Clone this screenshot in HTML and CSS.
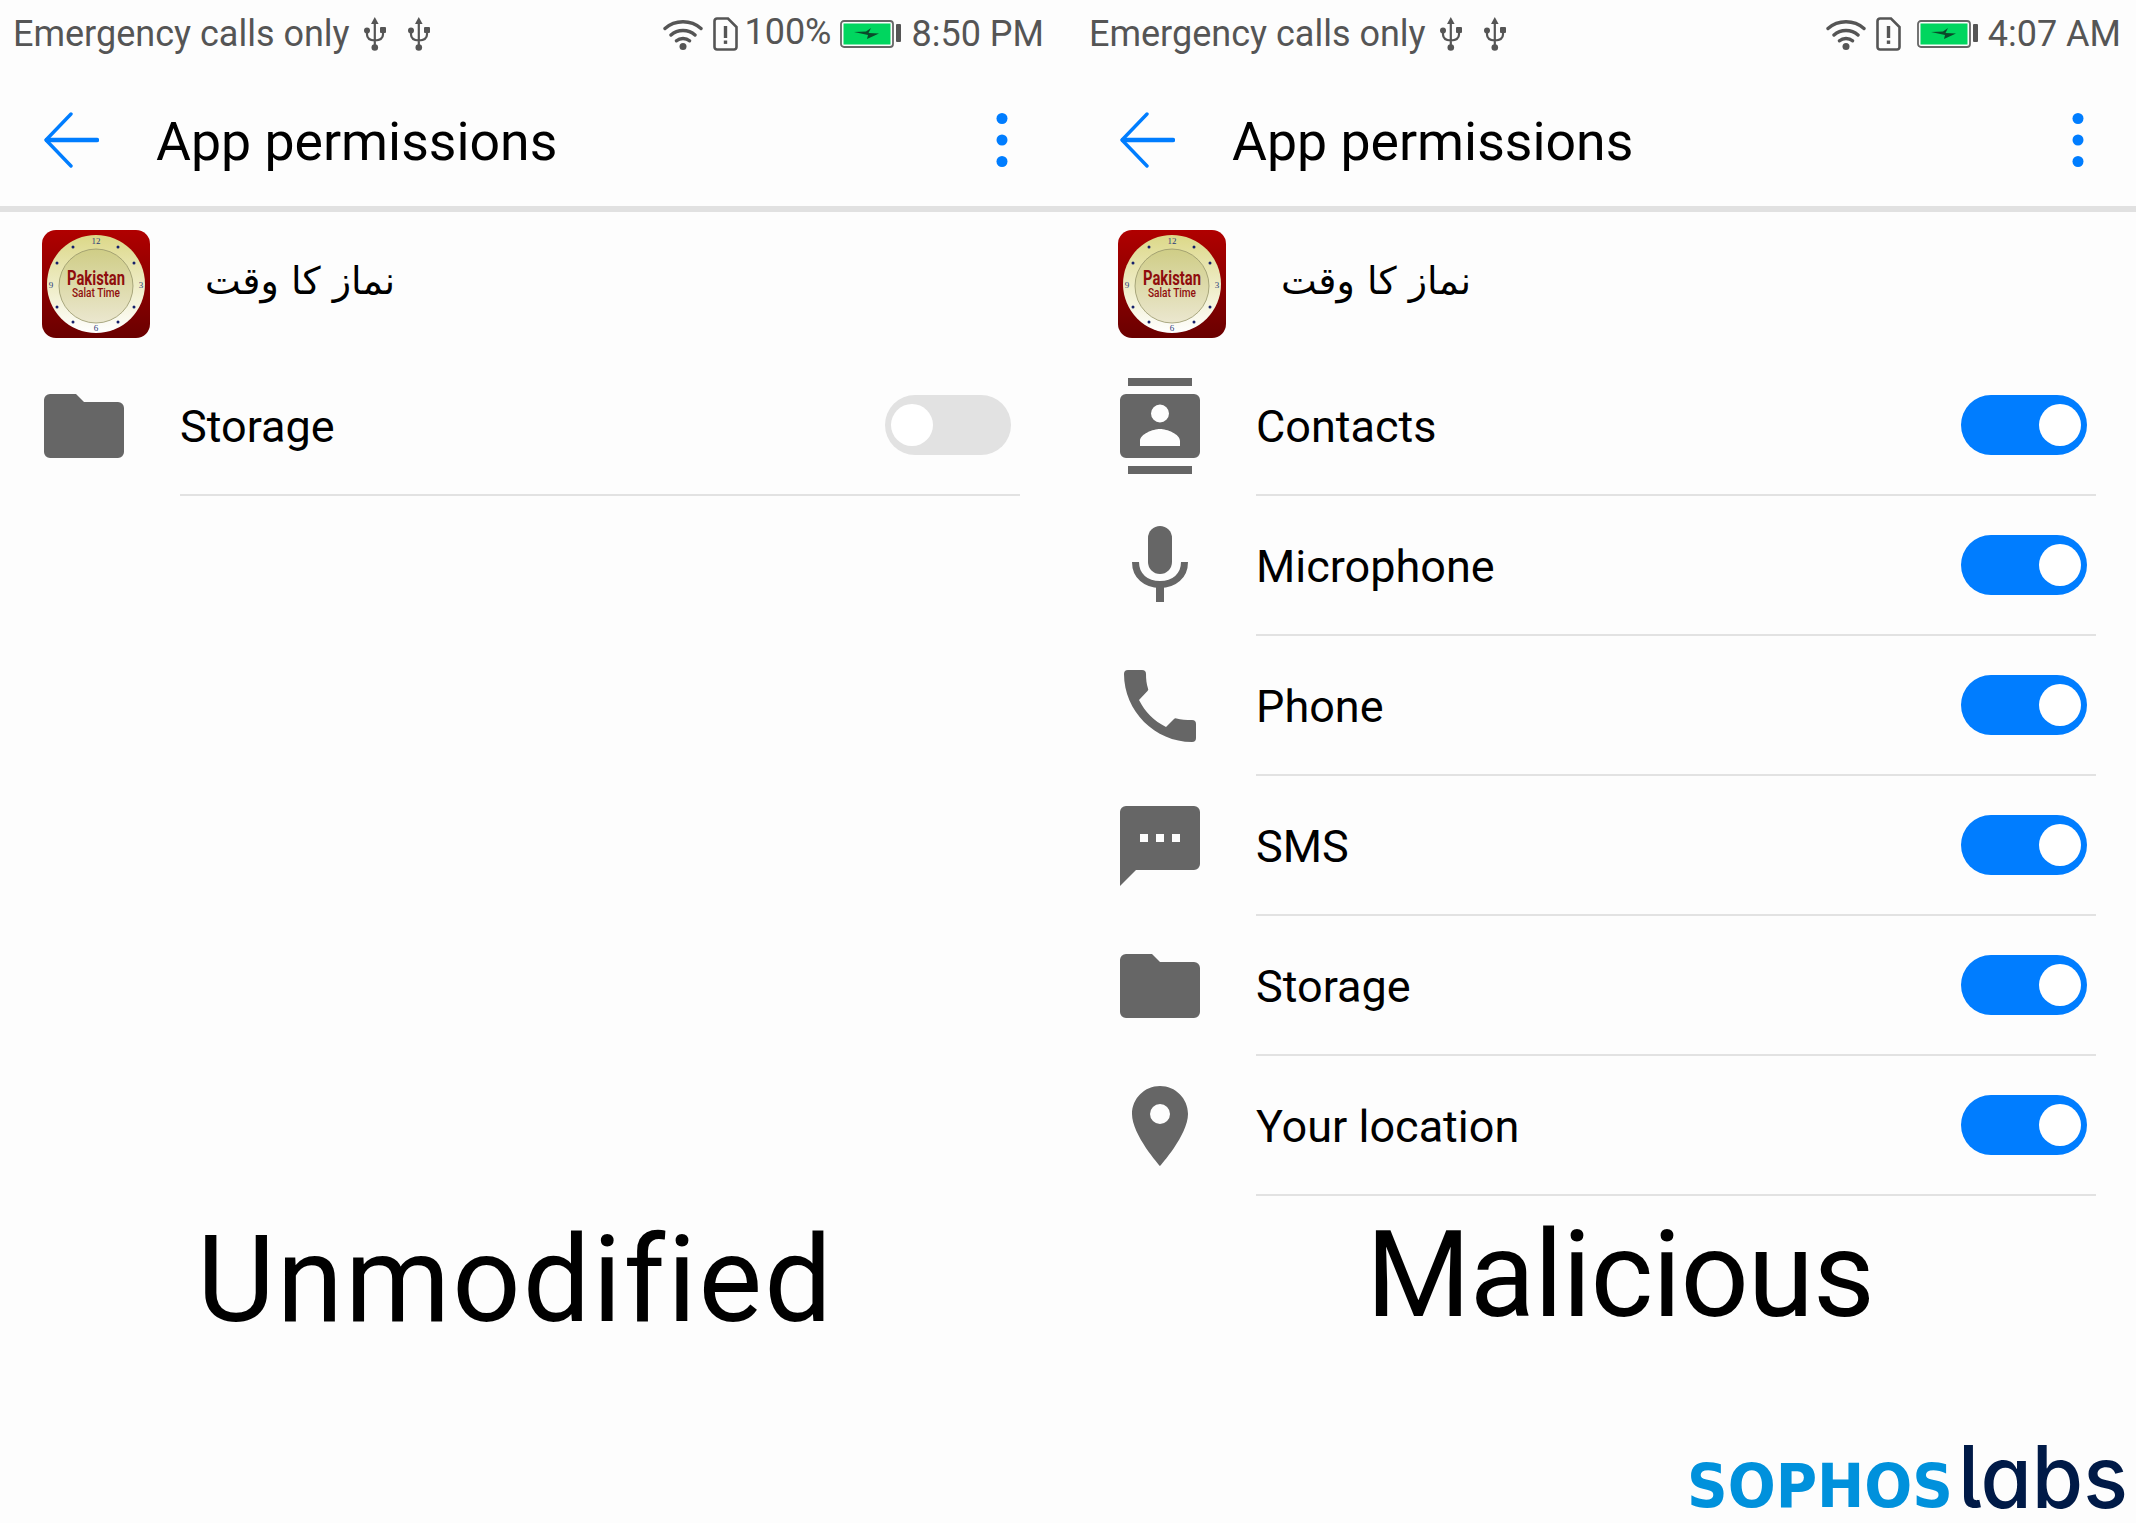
FILE: index.html
```html
<!DOCTYPE html>
<html>
<head>
  <meta charset="UTF-8">
  <title>App permissions</title>
  <link rel="stylesheet" href="styles.css">
</head>
<body>
  <svg class="defs" width="0" height="0">
    <defs>
      <linearGradient id="iconBg" x1="0" y1="0" x2="0" y2="1"><stop offset="0" stop-color="#b00000"/><stop offset="1" stop-color="#6a0000"/></linearGradient>
      <linearGradient id="iconRim" x1="0" y1="0" x2="0" y2="1"><stop offset="0" stop-color="#dcd888"/><stop offset="1" stop-color="#ffffff"/></linearGradient>
      <linearGradient id="iconFace" x1="0" y1="0" x2="0" y2="1"><stop offset="0" stop-color="#cfcd86"/><stop offset="1" stop-color="#ebe7cf"/></linearGradient>
    </defs>
    <symbol id="usb" viewBox="0 0 22 34">
      <path d="M10.800 0l3.800 7H7z" fill="#555"/>
      <path d="M10.800 6v22M3 14v3.500q0 5.500 7.800 6M19 14v3.500q0 5.500-8.200 6" fill="none" stroke="#555" stroke-width="2.200"/>
      <circle cx="10.800" cy="30.500" r="3.300" fill="#555"/>
      <circle cx="3" cy="13.500" r="3" fill="#555"/>
      <rect x="16" y="10" width="6" height="6" rx="1" fill="#555"/>
    </symbol>
    <symbol id="wifi" viewBox="0 0 40 32">
      <path d="M2 10.500C12 1.500 28 1.500 38 10.500M8 17C14.500 11 25.500 11 32 17M13.500 22.800c3.500-3 9.500-3 13 0" fill="none" stroke="#555" stroke-width="3.400" stroke-linecap="round"/>
      <circle cx="20" cy="28.500" r="3.500" fill="#555"/>
    </symbol>
    <symbol id="sim" viewBox="0 0 25 34">
      <path d="M4 1.500h11l8.500 8.500v20a2.500 2.500 0 0 1-2.500 2.500H4A2.500 2.500 0 0 1 1.500 30V4A2.500 2.500 0 0 1 4 1.500z" fill="none" stroke="#555" stroke-width="2.600"/>
      <rect x="10.800" y="9" width="3.400" height="12" fill="#555"/>
      <rect x="10.800" y="23.500" width="3.400" height="3.400" fill="#555"/>
    </symbol>
    <symbol id="battery" viewBox="0 0 62 28">
      <rect x="1" y="1" width="52" height="26" rx="3" fill="none" stroke="#666" stroke-width="1.800"/>
      <rect x="3.500" y="3.500" width="47" height="21" fill="#00d65f"/>
      <rect x="56" y="4" width="5" height="18" rx="1" fill="#555"/>
      <path d="M14 12L26 11.500 31 8 28.500 13 39 13.500 27 19 28 15z" fill="#0a4a2a"/>
    </symbol>
    <symbol id="back" viewBox="0 0 56 56">
      <path d="M28 2L3 28l25 26" fill="none" stroke="#007dff" stroke-width="3.400" stroke-linecap="round" stroke-linejoin="round"/>
      <path d="M4 28h50" stroke="#007dff" stroke-width="4.500" stroke-linecap="round"/>
    </symbol>
    <symbol id="dots" viewBox="0 0 12 54">
      <circle cx="6" cy="5.500" r="5.500"/>
      <circle cx="6" cy="27" r="5.500"/>
      <circle cx="6" cy="48.500" r="5.500"/>
    </symbol>
    <symbol id="folder" viewBox="0 0 96 96">
      <path d="M14 16h26l8 8h34a6 6 0 0 1 6 6v44a6 6 0 0 1-6 6H14a6 6 0 0 1-6-6V22a6 6 0 0 1 6-6z"/>
    </symbol>
    <symbol id="contacts" viewBox="0 0 96 96">
      <path fill-rule="evenodd" d="M16 0h64v8H16zM16 88h64v8H16zM14 16h68a6 6 0 0 1 6 6v52a6 6 0 0 1-6 6H14a6 6 0 0 1-6-6V22a6 6 0 0 1 6-6zM48 26.500a9 9 0 1 0 0 18 9 9 0 0 0 0-18zM28 68h40v-5c0-7-13-12-20-12s-20 5-20 12z"/>
    </symbol>
    <symbol id="mic" viewBox="0 0 96 96">
      <rect x="36" y="8" width="24" height="48" rx="12"/>
      <path d="M23.500 44C23.500 58 34 66.500 48 66.500S72.500 58 72.500 44" fill="none" stroke="#666" stroke-width="7"/>
      <rect x="44" y="66" width="8" height="18"/>
    </symbol>
    <symbol id="phone" viewBox="0 0 96 96">
      <path d="M16 12H30a4 4 0 0 1 4 4c0 5 .5 10 2 14.500a2 2 0 0 1-.5 2.500L27 42C33 54 42 63 54 69L62 61a2 2 0 0 1 2.500-.5C69 62 74 62 80 62a4 4 0 0 1 4 4V80a4 4 0 0 1-4 4C43 84 12 53 12 16a4 4 0 0 1 4-4z"/>
    </symbol>
    <symbol id="sms" viewBox="0 0 96 96">
      <path fill-rule="evenodd" d="M8 88V14a6 6 0 0 1 6-6h68a6 6 0 0 1 6 6v52a6 6 0 0 1-6 6H24zM28 36v8h8v-8zM44 36v8h8v-8zM60 36v8h8v-8z"/>
    </symbol>
    <symbol id="pin" viewBox="0 0 96 96">
      <path fill-rule="evenodd" d="M48 8C32.500 8 20 20.500 20 36 20 57 48 88 48 88S76 57 76 36C76 20.500 63.500 8 48 8zM48 26a10 10 0 1 1 0 20 10 10 0 0 1 0-20z"/>
    </symbol>
  </svg>

  <main class="phones">
    <section class="phone">
      <div class="statusbar">
        <span class="carrier">Emergency calls only</span>
        <svg class="ic-usb first"><use href="#usb"/></svg>
        <svg class="ic-usb"><use href="#usb"/></svg>
        <div class="status-right">
          <svg class="ic-wifi"><use href="#wifi"/></svg>
          <svg class="ic-sim"><use href="#sim"/></svg>
          <span class="percent">100%</span>
          <svg class="ic-battery"><use href="#battery"/></svg>
          <span class="clock">8:50 PM</span>
        </div>
      </div>
      <div class="toolbar">
        <svg class="ic-back"><use href="#back"/></svg>
        <h1 class="title">App permissions</h1>
        <svg class="ic-more"><use href="#dots"/></svg>
      </div>
      <div class="app-row">
        <svg class="app-icon" viewBox="0 0 108 108">
          <rect width="108" height="108" rx="14" fill="url(#iconBg)"/>
          <circle cx="54" cy="54" r="49" fill="url(#iconRim)"/>
          <circle cx="54" cy="56" r="37" fill="url(#iconFace)" stroke="#97966a" stroke-width=".8"/>
          <g fill="#15206b">
            <circle cx="31" cy="17" r="1.500"/><circle cx="76" cy="17" r="1.500"/>
            <circle cx="15" cy="33" r="1.500"/><circle cx="92" cy="33" r="1.500"/>
            <circle cx="15" cy="77" r="1.500"/><circle cx="92" cy="77" r="1.500"/>
            <circle cx="31" cy="92" r="1.500"/><circle cx="76" cy="92" r="1.500"/>
          </g>
          <g class="clock-num">
            <text x="54" y="14">12</text>
            <text x="99" y="58">3</text>
            <text x="54" y="101">6</text>
            <text x="9" y="58">9</text>
          </g>
          <text class="icon-title" x="25" y="55" textLength="58" lengthAdjust="spacingAndGlyphs">Pakistan</text>
          <text class="icon-sub" x="30" y="67" textLength="48" lengthAdjust="spacingAndGlyphs">Salat Time</text>
        </svg>
        <span class="app-name" dir="rtl">نماز کا وقت</span>
      </div>
      <div class="perm-list">
        <div class="perm">
          <svg class="perm-icon"><use href="#folder"/></svg>
          <div class="perm-body"><span class="label">Storage</span><span class="toggle off"></span></div>
        </div>
      </div>
      <div class="caption unmodified">Unmodified</div>
    </section>

    <section class="phone">
      <div class="statusbar">
        <span class="carrier">Emergency calls only</span>
        <svg class="ic-usb first"><use href="#usb"/></svg>
        <svg class="ic-usb"><use href="#usb"/></svg>
        <div class="status-right">
          <svg class="ic-wifi"><use href="#wifi"/></svg>
          <svg class="ic-sim"><use href="#sim"/></svg>
          <svg class="ic-battery"><use href="#battery"/></svg>
          <span class="clock">4:07 AM</span>
        </div>
      </div>
      <div class="toolbar">
        <svg class="ic-back"><use href="#back"/></svg>
        <h1 class="title">App permissions</h1>
        <svg class="ic-more"><use href="#dots"/></svg>
      </div>
      <div class="app-row">
        <svg class="app-icon" viewBox="0 0 108 108">
          <rect width="108" height="108" rx="14" fill="url(#iconBg)"/>
          <circle cx="54" cy="54" r="49" fill="url(#iconRim)"/>
          <circle cx="54" cy="56" r="37" fill="url(#iconFace)" stroke="#97966a" stroke-width=".8"/>
          <g fill="#15206b">
            <circle cx="31" cy="17" r="1.500"/><circle cx="76" cy="17" r="1.500"/>
            <circle cx="15" cy="33" r="1.500"/><circle cx="92" cy="33" r="1.500"/>
            <circle cx="15" cy="77" r="1.500"/><circle cx="92" cy="77" r="1.500"/>
            <circle cx="31" cy="92" r="1.500"/><circle cx="76" cy="92" r="1.500"/>
          </g>
          <g class="clock-num">
            <text x="54" y="14">12</text>
            <text x="99" y="58">3</text>
            <text x="54" y="101">6</text>
            <text x="9" y="58">9</text>
          </g>
          <text class="icon-title" x="25" y="55" textLength="58" lengthAdjust="spacingAndGlyphs">Pakistan</text>
          <text class="icon-sub" x="30" y="67" textLength="48" lengthAdjust="spacingAndGlyphs">Salat Time</text>
        </svg>
        <span class="app-name" dir="rtl">نماز کا وقت</span>
      </div>
      <div class="perm-list">
        <div class="perm">
          <svg class="perm-icon"><use href="#contacts"/></svg>
          <div class="perm-body"><span class="label">Contacts</span><span class="toggle"></span></div>
        </div>
        <div class="perm">
          <svg class="perm-icon"><use href="#mic"/></svg>
          <div class="perm-body"><span class="label">Microphone</span><span class="toggle"></span></div>
        </div>
        <div class="perm">
          <svg class="perm-icon"><use href="#phone"/></svg>
          <div class="perm-body"><span class="label">Phone</span><span class="toggle"></span></div>
        </div>
        <div class="perm">
          <svg class="perm-icon"><use href="#sms"/></svg>
          <div class="perm-body"><span class="label">SMS</span><span class="toggle"></span></div>
        </div>
        <div class="perm">
          <svg class="perm-icon"><use href="#folder"/></svg>
          <div class="perm-body"><span class="label">Storage</span><span class="toggle"></span></div>
        </div>
        <div class="perm">
          <svg class="perm-icon"><use href="#pin"/></svg>
          <div class="perm-body"><span class="label">Your location</span><span class="toggle"></span></div>
        </div>
      </div>
      <div class="caption malicious">Malicious</div>
    </section>
  </main>

  <footer class="brand">
    <svg class="brand-logo" viewBox="0 0 440 66">
      <text class="brand-sophos" x="-3" y="63" textLength="266" lengthAdjust="spacingAndGlyphs">SOPHOS</text>
      <text class="brand-labs" x="268" y="64" textLength="170" lengthAdjust="spacingAndGlyphs">labs</text>
    </svg>
  </footer>
</body>
</html>
```

FILE: styles.css
```css
html, body { margin: 0; height: 1523px; overflow: hidden; }
body { background: #fdfdfd; font-family: Roboto, "Liberation Sans", sans-serif; color: #000; }
.defs { position: absolute; }
svg { display: block; flex: none; }

.phones { display: flex; }
.phone { flex: none; width: 1076px; }
.phone + .phone { width: 1060px; }

/* status bar */
.statusbar { display: flex; align-items: center; height: 68px; padding-left: 13px; font-size: 36px; color: #555; }
.ic-usb { width: 22px; height: 34px; margin-left: 22px; }
.ic-usb.first { margin-left: 14px; }
.status-right { flex: 1; display: flex; align-items: center; justify-content: flex-end; padding-right: 32px; }
.phone + .phone .status-right { padding-right: 15px; }
.ic-wifi { width: 40px; height: 32px; margin-right: 10px; }
.ic-sim { width: 25px; height: 34px; margin-right: 6px; }
.phone + .phone .ic-sim { margin-right: 16px; }
.percent { margin: -4px 8px 0 0; }
.ic-battery { width: 62px; height: 28px; margin-right: 10px; }
.phone + .phone .ic-battery { margin-right: 9px; }

/* toolbar */
.toolbar { display: flex; align-items: center; height: 132px; padding: 6px 0 0 43px; border-bottom: 6px solid #e1e1e1; }
.ic-back { width: 56px; height: 56px; }
.title { margin: 0 0 0 57px; padding-top: 2px; font-size: 53.600px; font-weight: 400; }
.ic-more { width: 12px; height: 54px; margin-left: auto; margin-right: 68px; fill: #007dff; }
.phone + .phone .ic-more { margin-right: 52px; }

/* app row */
.app-row { display: flex; align-items: center; height: 144px; padding-left: 42px; }
.app-icon { width: 108px; height: 108px; }
.app-name { margin: 0 0 6px 55px; font-family: "DejaVu Sans", sans-serif; font-size: 38px; }
.clock-num text { font: 9px "Liberation Serif", serif; fill: #2a3a7a; text-anchor: middle; }
.icon-title { font: 700 20px Roboto, sans-serif; fill: #8f0d0d; }
.icon-sub { font: 500 12.500px Roboto, sans-serif; fill: #8f0d0d; }

/* permissions */
.perm-list { height: 840px; }
.perm { display: flex; height: 140px; padding: 0 56px 0 36px; }
.phone + .phone .perm { padding-right: 40px; }
.perm-icon { width: 96px; height: 96px; margin: 22px 48px 0 0; fill: #666; }
.perm-body { flex: 1; display: flex; align-items: center; justify-content: space-between; padding-right: 9px; border-bottom: 2px solid #e2e2e2; font-size: 45px; }
.label { padding-top: 2px; }

.toggle { position: relative; width: 126px; height: 60px; border-radius: 30px; background: #007dff; }
.toggle::after { content: ""; position: absolute; top: 9px; right: 6px; width: 42px; height: 42px; border-radius: 50%; background: #fff; }
.toggle.off { background: #e2e2e2; }
.toggle.off::after { right: auto; left: 6px; }

/* captions */
.caption { font-size: 120px; line-height: 140px; }
.unmodified { margin-top: 14px; padding-left: 197px; letter-spacing: 2px; }
.malicious { margin-top: 9px; padding-left: 290px; letter-spacing: -1px; }

/* logo */
.brand { display: flex; justify-content: flex-end; padding-right: 6px; margin-top: 94px; }
.brand-logo { width: 440px; height: 66px; overflow: visible; }
.brand-sophos { font: 700 60px "DejaVu Sans", sans-serif; fill: #0091dc; }
.brand-labs { font: 500 86px Inter, Roboto, sans-serif; font-feature-settings: "cv11", "cv05"; fill: #001a47; }
```
